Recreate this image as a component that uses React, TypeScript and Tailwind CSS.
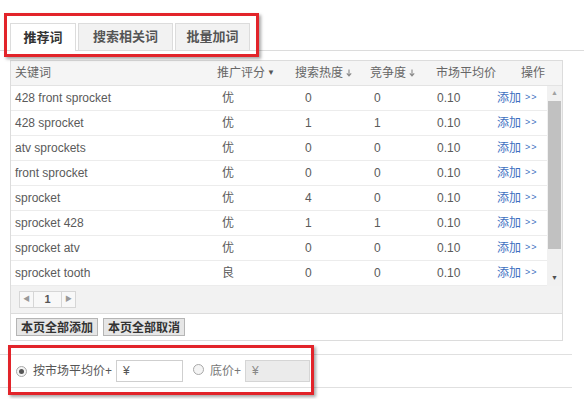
import React from "react";

const rows = [
  { k: "428 front sprocket", s: "优", h: "0", c: "0", p: "0.10" },
  { k: "428 sprocket", s: "优", h: "1", c: "1", p: "0.10" },
  { k: "atv sprockets", s: "优", h: "0", c: "0", p: "0.10" },
  { k: "front sprocket", s: "优", h: "0", c: "0", p: "0.10" },
  { k: "sprocket", s: "优", h: "4", c: "0", p: "0.10" },
  { k: "sprocket 428", s: "优", h: "1", c: "1", p: "0.10" },
  { k: "sprocket atv", s: "优", h: "0", c: "0", p: "0.10" },
  { k: "sprocket tooth", s: "良", h: "0", c: "0", p: "0.10" },
];

function SortArrow() {
  return (
    <svg width="6" height="8" viewBox="0 0 6 8" className="ml-[3px] inline-block">
      <path d="M3 0.5V6.5M0.8 4.3L3 6.8L5.2 4.3" stroke="#888" strokeWidth="1.1" fill="none" />
    </svg>
  );
}

function Radio({ checked }: { checked?: boolean }) {
  return (
    <span className="inline-flex h-[11px] w-[11px] items-center justify-center rounded-full border border-[#a8a8a8] bg-[#f4f4f4]">
      {checked ? <span className="h-[5px] w-[5px] rounded-full bg-[#555]" /> : null}
    </span>
  );
}

export default function App() {
  return (
    <div
      className="relative h-[399px] w-[584px] overflow-hidden bg-white text-[12px] text-[#5a5a5a]"
      style={{ fontFamily: '"Liberation Sans", "Noto Sans CJK SC", sans-serif' }}
    >
      {/* Tabs */}
      <div className="mt-[23px] flex h-[28px] items-end gap-[2px] border-b border-[#dcdcdc] pl-[10px]">
        <div className="-mb-px flex h-[28px] w-[66px] items-center justify-center border border-b-0 border-[#dcdcdc] bg-white text-[13px] font-bold text-[#333]">
          推荐词
        </div>
        <div className="flex h-[27px] w-[95px] items-center justify-center border border-b-0 border-[#dcdcdc] bg-[#f2f2f2] text-[13px] font-bold text-[#555]">
          搜索相关词
        </div>
        <div className="flex h-[27px] w-[75px] items-center justify-center border border-b-0 border-[#dcdcdc] bg-[#f2f2f2] text-[13px] font-bold text-[#555]">
          批量加词
        </div>
      </div>

      {/* Table */}
      <div className="ml-[10px] mt-[9px] w-[553px] border-x border-t border-[#dcdcdc]">
        <div className="grid h-[25px] grid-cols-[201px_78px_75px_66px_61px_1fr] items-center whitespace-nowrap border-b border-[#e3e3e3] bg-[#f5f5f5] text-[#666]">
          <div className="pl-[4px]">关键词</div>
          <div className="flex items-center pl-[5px]">
            推广评分
            <span className="ml-[2px] text-[8px] text-[#555]">▼</span>
          </div>
          <div className="flex items-center pl-[5px]">
            搜索热度
            <SortArrow />
          </div>
          <div className="flex items-center pl-[5px]">
            竞争度
            <SortArrow />
          </div>
          <div className="pl-[5px]">市场平均价</div>
          <div className="pl-[29px]">操作</div>
        </div>
        <div className="flex">
          <div className="w-[537px]">
            {rows.map((r, i) => (
              <div
                key={i}
                className="grid h-[25px] grid-cols-[201px_78px_75px_66px_61px_1fr] items-center border-b border-[#ececec] bg-white"
              >
                <div className="pl-[4px]">{r.k}</div>
                <div className="pl-[10px]">{r.s}</div>
                <div className="pl-[15px]">{r.h}</div>
                <div className="pl-[9px]">{r.c}</div>
                <div className="pl-[6px]">{r.p}</div>
                <div className="flex items-center whitespace-nowrap pl-[5px] text-[#3d6fbf]">
                  添加
                  <span className="ml-[4px] text-[9px] tracking-[1px]">&gt;&gt;</span>
                </div>
              </div>
            ))}
          </div>
          <div className="flex w-[15px] flex-col items-center bg-[#f1f1f1]">
            <div className="flex h-[15px] w-full items-center justify-center text-[7px] text-[#a0a0a0]">▲</div>
            <div className="h-[148px] w-[13px] bg-[#c1c1c1]" />
            <div className="flex-1" />
            <div className="flex h-[16px] w-full items-center justify-center text-[7px] text-[#505050]">▼</div>
          </div>
        </div>
        <div className="flex h-[27px] items-center bg-[#f2f2f2] pl-[8px]">
          <div className="flex h-[17px] items-center border border-[#d6d6d6] bg-[#f8f8f8]">
            <div className="flex h-full w-[14px] items-center justify-center border-r border-[#d6d6d6] text-[7px] text-[#999]">◀</div>
            <div className="flex w-[27px] items-center justify-center text-[11px] font-bold text-[#555]">1</div>
            <div className="flex h-full w-[14px] items-center justify-center border-l border-[#d6d6d6] text-[7px] text-[#999]">▶</div>
          </div>
        </div>
      </div>
      <div className="ml-[10px] flex h-[28px] w-[553px] items-center gap-[5px] border border-[#dcdcdc] pl-[5px]">
        <button className="h-[18px] w-[82px] border border-[#b5b5b5] bg-[#e6e6e6] text-[12px] font-bold text-[#333]">
          本页全部添加
        </button>
        <button className="h-[18px] w-[82px] border border-[#b5b5b5] bg-[#e6e6e6] text-[12px] font-bold text-[#333]">
          本页全部取消
        </button>
      </div>

      {/* Price option section */}
      <div className="mt-[13px] flex h-[34px] w-[572px] items-center border-y border-[#e0e0e0] pl-[16px]">
        <Radio checked />
        <span className="ml-[6px] text-[#555]">按市场平均价+</span>
        <div className="ml-[4px] flex h-[22px] w-[67px] items-center border border-[#cfcfcf] bg-white pl-[6px] text-[#555]">
          ¥
        </div>
        <span className="ml-[10px]">
          <Radio />
        </span>
        <span className="ml-[6px] text-[#777]">底价+</span>
        <div className="ml-[4px] flex h-[22px] w-[65px] items-center border border-[#d5d5d5] bg-[#ebebeb] pl-[6px] text-[#888]">
          ¥
        </div>
      </div>

      {/* Red annotation boxes */}
      <div className="pointer-events-none absolute left-[4px] top-[13px] h-[44px] w-[255px] border-[3px] border-[#e2242a] shadow-[2px_2px_3px_rgba(0,0,0,0.35)]" />
      <div className="pointer-events-none absolute left-[8px] top-[345px] h-[50px] w-[306px] border-[3px] border-[#e2242a] shadow-[2px_2px_3px_rgba(0,0,0,0.35)]" />
    </div>
  );
}
